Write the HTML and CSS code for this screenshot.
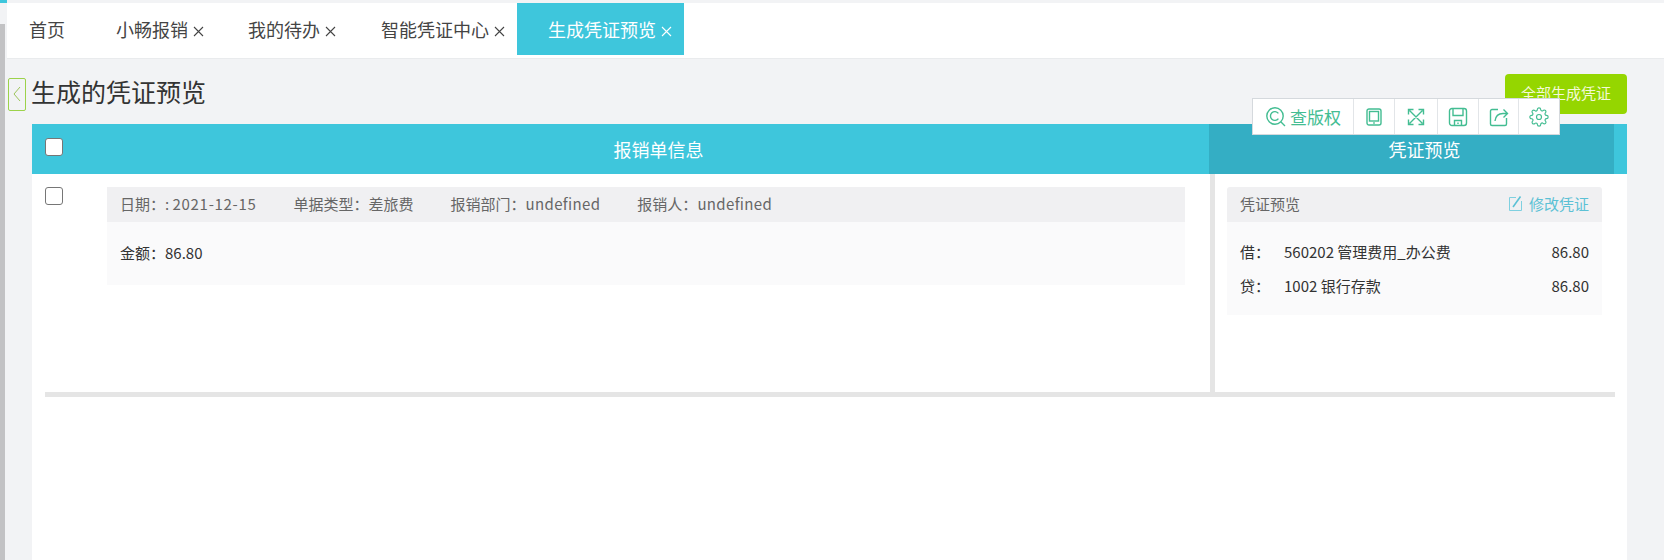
FILE: index.html
```html
<!DOCTYPE html>
<html lang="zh-CN">

<head>
    <meta charset="UTF-8" />
    <meta name="viewport" content="width=device-width, initial-scale=1.0" />
    <title>生成凭证预览</title>
    <link rel="stylesheet" href="styles.css">
</head>

<body>
    <div class="app">
        <div class="rail">
            <div class="rail-cap"></div>
            <div class="rail-bar"></div>
        </div>

        <div class="content">
            <nav class="tabs">
                <a class="tab tab-home">首页</a>
                <a class="tab">小畅报销<svg class="close" viewBox="0 0 11 11"><path d="M1 1l9 9M10 1l-9 9" /></svg></a>
                <a class="tab">我的待办<svg class="close" viewBox="0 0 11 11"><path d="M1 1l9 9M10 1l-9 9" /></svg></a>
                <a class="tab tab-tight">智能凭证中心<svg class="close" viewBox="0 0 11 11"><path d="M1 1l9 9M10 1l-9 9" /></svg></a>
                <a class="tab tab-active">生成凭证预览<svg class="close" viewBox="0 0 11 11"><path d="M1 1l9 9M10 1l-9 9" /></svg></a>
            </nav>

            <header class="page-head">
                <button class="back">
                    <svg width="10" height="20" viewBox="0 0 10 20">
                        <path d="M8 3 2 10l6 7" fill="none" stroke="#9cc45a" stroke-width="1" />
                    </svg>
                </button>
                <h1>生成的凭证预览</h1>
                <button class="generate">全部生成凭证</button>
            </header>

            <main class="panel">
                <div class="panel-head">
                    <div class="head-main">
                        <input type="checkbox" class="check check-head">
                        <span>报销单信息</span>
                    </div>
                    <div class="head-side">凭证预览</div>
                </div>

                <section class="row">
                    <div class="row-main">
                        <input type="checkbox" class="check">
                        <div class="bill">
                            <div class="bill-title">
                                <span>日期：: <span class="date">2021-12-15</span></span>
                                <span>单据类型：差旅费</span>
                                <span>报销部门：<span class="latin">undefined</span></span>
                                <span>报销人：<span class="latin">undefined</span></span>
                            </div>
                            <div class="bill-body">金额：86.80</div>
                        </div>
                    </div>

                    <div class="row-side">
                        <div class="voucher-title">
                            <span>凭证预览</span>
                            <a class="edit">
                                <svg width="13" height="15" viewBox="0 0 13 15">
                                    <path d="M7 1.5H.5v13h12V5" fill="none" stroke="#7fd0e0" />
                                    <path d="M4 11 11.5.5" fill="none" stroke="#5cc1d5" stroke-width="1.6" />
                                </svg>
                                修改凭证
                            </a>
                        </div>
                        <div class="voucher-body">
                            <div class="entry"><span>借：</span><span>560202 管理费用_办公费</span><span>86.80</span></div>
                            <div class="entry"><span>贷：</span><span>1002 银行存款</span><span>86.80</span></div>
                        </div>
                    </div>
                </section>
            </main>
        </div>
    </div>

    <!-- floating toolbar sits over the button and the table head -->
    <div class="toolbar">
        <a class="tool tool-text">
            <svg width="22" height="22" viewBox="0 0 22 22">
                <circle cx="10" cy="10" r="8.2" />
                <path d="M13.4 7.4a4.4 4.4 0 1 0 0 5.2M16 16l4 4" />
            </svg>
            查版权
        </a>
        <a class="tool">
            <svg width="16" height="18" viewBox="0 0 16 18">
                <rect x="1" y="1" width="14" height="16" rx="2" />
                <rect x="3.500" y="3.500" width="9" height="9.500" />
                <path d="M7.200 15h1.600" />
            </svg>
        </a>
        <a class="tool tool-wide">
            <svg width="18" height="18" viewBox="0 0 18 18">
                <path d="M2.500 2.500l13 13M15.500 2.500l-13 13M1.500 6.500v-5h5M11.500 1.500h5v5M16.500 11.500v5h-5M6.500 16.500h-5v-5" />
            </svg>
        </a>
        <a class="tool">
            <svg width="20" height="20" viewBox="0 0 20 20">
                <rect x="1.500" y="1.500" width="17" height="17" rx="2.500" />
                <path d="M5 1.500v7h10v-7M6.500 18.500v-5h7v5M10 15.500v1.500" />
            </svg>
        </a>
        <a class="tool tool-narrow">
            <svg width="20" height="20" viewBox="0 0 20 20">
                <path d="M9 2.500H3a1.500 1.500 0 0 0-1.500 1.500v13A1.500 1.500 0 0 0 3 18.500h13a1.500 1.500 0 0 0 1.500-1.500v-6" />
                <path d="M6 14c.5-4.500 3.500-7.500 8-7.500h4.500M14.500 2.500l4 4-4 4" />
            </svg>
        </a>
        <a class="tool">
            <svg width="20" height="20" viewBox="0 0 24 24">
                <circle cx="12" cy="12" r="3" />
                <path d="M19.400 15a1.650 1.650 0 0 0 .33 1.820l.06.06a2 2 0 0 1 0 2.830 2 2 0 0 1-2.830 0l-.06-.06a1.650 1.650 0 0 0-1.820-.33 1.650 1.650 0 0 0-1 1.510V21a2 2 0 0 1-2 2 2 2 0 0 1-2-2v-.09A1.650 1.650 0 0 0 9 19.400a1.650 1.650 0 0 0-1.820.33l-.06.06a2 2 0 0 1-2.830 0 2 2 0 0 1 0-2.830l.06-.06a1.650 1.650 0 0 0 .33-1.820 1.650 1.650 0 0 0-1.510-1H3a2 2 0 0 1-2-2 2 2 0 0 1 2-2h.09A1.650 1.650 0 0 0 4.600 9a1.650 1.650 0 0 0-.33-1.820l-.06-.06a2 2 0 0 1 0-2.830 2 2 0 0 1 2.830 0l.06.06a1.650 1.650 0 0 0 1.820.33H9a1.650 1.650 0 0 0 1-1.510V3a2 2 0 0 1 2-2 2 2 0 0 1 2 2v.09a1.650 1.650 0 0 0 1 1.510 1.650 1.650 0 0 0 1.820-.33l.06-.06a2 2 0 0 1 2.830 0 2 2 0 0 1 0 2.830l-.06.06a1.650 1.650 0 0 0-.33 1.820V9a1.650 1.650 0 0 0 1.510 1H21a2 2 0 0 1 2 2 2 2 0 0 1-2 2h-.09a1.650 1.650 0 0 0-1.510 1z" />
            </svg>
        </a>
    </div>
</body>

</html>
```

FILE: styles.css
```css
body {
    font-family: "Noto Sans CJK SC", "Noto Sans", sans-serif;
    margin: 0;
    height: 560px;
    overflow: hidden;
    background-color: #f2f3f5;
    color: #333;
}

.app {
    display: flex;
    height: 560px;
}

.rail {
    display: flex;
    flex-direction: column;
    width: 7px;
    flex-shrink: 0;
}

.rail-cap {
    height: 3px;
    margin-bottom: 21px;
    background-color: #3ec6dc;
}

.rail-bar {
    flex: 1;
    width: 5px;
    background-color: #c2c2c4;
}

.content {
    flex: 1;
    min-width: 0;
    padding-top: 3px;
}

/* tabs */
.tabs {
    display: flex;
    height: 55px;
    background-color: #fff;
    box-shadow: 0 1px 0 #e9ebed;
}

.tab {
    display: flex;
    align-items: center;
    height: 52px;
    padding: 0 22px;
    font-size: 18px;
    color: #444;
}

.tab-home {
    padding-right: 29px;
}

.tab-tight {
    padding: 0 12px 0 23px;
}

.tab-active {
    padding: 0 12px 0 31px;
    background-color: #3ec6dc;
    color: #fff;
}

.close {
    width: 11px;
    height: 11px;
    margin: 4px 0 0 5px;
    fill: none;
    stroke: currentColor;
    stroke-width: 1.1;
}

/* title row */
.page-head {
    display: flex;
    align-items: center;
    height: 66px;
    padding: 6px 37px 0 1px;
    box-sizing: border-box;
}

.back {
    width: 18px;
    height: 33px;
    padding: 0;
    margin-right: 5px;
    display: flex;
    align-items: center;
    justify-content: center;
    background: transparent;
    border: 1px solid #9cd24a;
    border-radius: 2px;
}

.page-head h1 {
    margin: 0 0 6px;
    font-size: 25px;
    font-weight: 400;
    color: #333;
}

.generate {
    width: 122px;
    height: 40px;
    margin-left: auto;
    padding: 0 0 3px;
    border: 0;
    border-radius: 4px;
    background-color: #95d600;
    color: #f4f9d8;
    font-family: inherit;
    font-size: 15px;
}

/* table */
.panel {
    height: 436px;
    margin: 0 37px 0 25px;
    background-color: #fff;
}

.panel-head {
    display: grid;
    grid-template-columns: 1177px 405px 13px;
    height: 50px;
    background-color: #3ec6dc;
    color: #fff;
    font-size: 18px;
}

.head-main {
    display: flex;
    align-items: center;
    justify-content: center;
    position: relative;
    padding-left: 76px;
}

.check {
    appearance: none;
    width: 18px;
    height: 18px;
    margin: 0;
    flex-shrink: 0;
    background-color: #fff;
    border: 1px solid #767676;
    border-radius: 3px;
}

.check-head {
    position: absolute;
    left: 13px;
    top: 14px;
}

.head-side {
    display: flex;
    align-items: center;
    justify-content: center;
    padding-left: 26px;
    background-color: #34aec4;
}

.row {
    display: grid;
    grid-template-columns: 1165px 405px;
    height: 223px;
    margin: 0 12px 0 13px;
    border-bottom: 5px solid #e5e5e5;
    box-sizing: border-box;
}

.row-main {
    display: flex;
    align-items: flex-start;
    gap: 44px;
    padding: 13px 25px 0 0;
}

.bill {
    flex: 1;
    font-size: 15px;
}

.bill-title {
    display: flex;
    align-items: center;
    gap: 37px;
    height: 35px;
    padding: 0 0 2px 13px;
    box-sizing: border-box;
    background-color: #f0f0f2;
    color: #666;
}

.date {
    letter-spacing: .7px;
}

.latin {
    letter-spacing: .35px;
}

.bill-body {
    height: 63px;
    line-height: 61px;
    padding-left: 13px;
    background-color: #fafafb;
    color: #333;
}

.row-side {
    padding: 13px 13px 0 12px;
    border-left: 5px solid #e5e5e5;
    font-size: 15px;
}

.voucher-title {
    display: flex;
    align-items: center;
    justify-content: space-between;
    height: 35px;
    padding: 0 13px 2px;
    box-sizing: border-box;
    background-color: #f0f0f2;
    border-radius: 3px 3px 0 0;
    color: #666;
}

.edit {
    display: flex;
    align-items: center;
    gap: 7px;
    color: #5cc1d5;
}

.voucher-body {
    height: 93px;
    padding: 14px 13px 0;
    box-sizing: border-box;
    background-color: #fafafb;
}

.entry {
    display: grid;
    grid-template-columns: 44px 1fr auto;
    height: 34px;
    line-height: 32px;
    font-size: 15px;
}

/* toolbar */
.toolbar {
    position: absolute;
    top: 98px;
    left: 1252px;
    display: flex;
    height: 37px;
    background-color: #fff;
    border: 1px solid #d5d9dd;
    box-sizing: border-box;
}

.tool {
    display: flex;
    align-items: center;
    justify-content: center;
    width: 41px;
    border-left: 1px solid #e2e5e8;
    color: #43bd92;
    box-sizing: border-box;
}

.tool-text {
    width: 100px;
    gap: 3px;
    border-left: 0;
    font-size: 17px;
}

.tool-wide {
    width: 43px;
}

.tool-narrow {
    width: 40px;
}

.tool svg {
    fill: none;
    stroke: #43bd92;
    stroke-width: 1.4;
}
```
